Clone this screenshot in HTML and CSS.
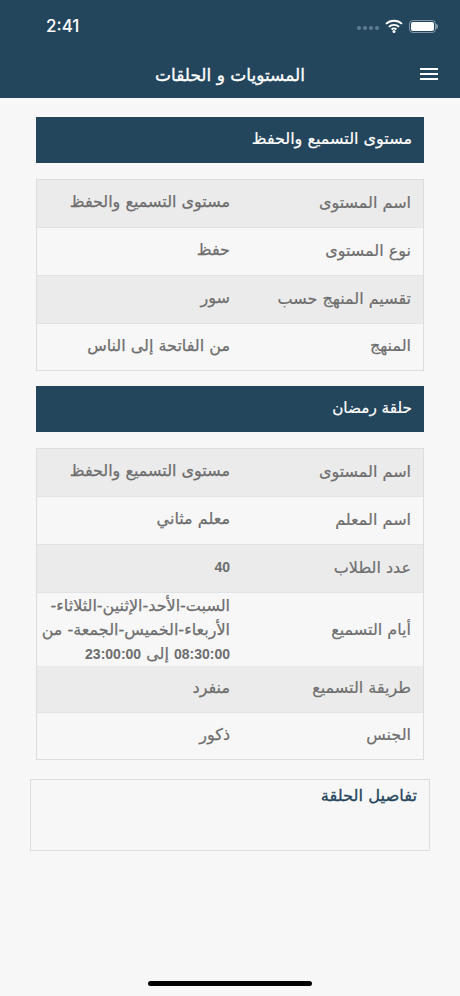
FILE: index.html
```html
<!DOCTYPE html>
<html lang="ar">
<head>
<meta charset="utf-8">
<title>المستويات و الحلقات</title>
<link rel="stylesheet" href="styles.css">
</head>
<body>
<header class="top">
  <div class="status" dir="ltr">
    <span class="time">2:41</span>
    <div class="status-icons">
      <span class="dots"><i></i><i></i><i></i><i></i></span>
      <svg class="wifi" width="18" height="14" viewBox="0 0 18 14"><path d="M1 4.9a11.6 11.6 0 0 1 16 0M3.9 7.9a7.4 7.4 0 0 1 10.2 0M6.6 10.5a3.4 3.4 0 0 1 4.8 0" fill="none" stroke="#fff" stroke-width="1.9"/><circle cx="9" cy="12.4" r="1.5" fill="#fff"/></svg>
      <span class="battery"><b></b></span>
    </div>
  </div>
  <div class="nav" dir="ltr">
    <h1 dir="rtl">المستويات و الحلقات</h1>
    <span class="menu"><i></i><i></i><i></i></span>
  </div>
</header>
<main dir="rtl">
  <h2 class="band">مستوى التسميع والحفظ</h2>
  <div class="table">
    <div class="row"><span class="k">اسم المستوى</span><span class="v">مستوى التسميع والحفظ</span></div>
    <div class="row"><span class="k">نوع المستوى</span><span class="v">حفظ</span></div>
    <div class="row"><span class="k">تقسيم المنهج حسب</span><span class="v">سور</span></div>
    <div class="row"><span class="k">المنهج</span><span class="v">من الفاتحة إلى الناس</span></div>
  </div>
  <h2 class="band band-two">حلقة رمضان</h2>
  <div class="table">
    <div class="row"><span class="k">اسم المستوى</span><span class="v">مستوى التسميع والحفظ</span></div>
    <div class="row"><span class="k">اسم المعلم</span><span class="v">معلم مثاني</span></div>
    <div class="row"><span class="k">عدد الطلاب</span><span class="v"><span class="num">40</span></span></div>
    <div class="row row-tall"><span class="k">أيام التسميع</span><span class="v">السبت-الأحد-الإثنين-الثلاثاء-الأربعاء-الخميس-الجمعة- من <span class="num">08:30:00</span> إلى <span class="num">23:00:00</span></span></div>
    <div class="row"><span class="k">طريقة التسميع</span><span class="v">منفرد</span></div>
    <div class="row"><span class="k">الجنس</span><span class="v">ذكور</span></div>
  </div>
  <section class="details"><h3>تفاصيل الحلقة</h3></section>
</main>
<div class="home"></div>
</body>
</html>
```
FILE: styles.css
```css
* { box-sizing: border-box; }
html, body { margin: 0; padding: 0; }
body {
  width: 460px;
  height: 996px;
  overflow: hidden;
  background: #f7f7f8;
  font-family: "DejaVu Sans", "Noto Sans", sans-serif;
  position: relative;
}
.top { height: 98px; background: #24465c; color: #fff; padding-top: 13px; }
.status { display: flex; justify-content: space-between; align-items: center; height: 26px; padding: 0 24px 0 46px; }
.time { font-family: "Inter", "Liberation Sans", sans-serif; font-size: 17px; font-weight: 500; }
.status-icons { display: flex; align-items: center; gap: 6px; }
.dots { display: flex; gap: 2px; margin-top: 4px; }
.dots i { width: 4px; height: 4px; border-radius: 50%; background: #5f7d92; }
.battery { width: 27px; height: 13px; border: 1px solid #7f97a8; border-radius: 4px; padding: 1px; position: relative; }
.battery b { display: block; height: 100%; background: #fff; border-radius: 2px; }
.battery::after { content: ""; position: absolute; right: -3px; top: 3px; width: 2px; height: 5px; background: #7f97a8; border-radius: 0 2px 2px 0; }
.nav { position: relative; display: flex; justify-content: center; align-items: center; height: 59px; padding: 12px 0 0; }
.nav h1 { margin: 0; font-size: 17px; font-weight: 400; -webkit-text-stroke: 0.35px #fff; color: #fff; }
.menu { position: absolute; right: 22px; top: 29px; display: flex; flex-direction: column; gap: 3px; }
.menu i { display: block; width: 18px; height: 2px; background: #fff; }
main { padding: 19px 36px 0; }
.band { margin: 0; height: 46px; display: flex; align-items: center; padding: 0 12px 3px; background: #24465c; color: #fff; font-size: 16px; font-weight: 400; -webkit-text-stroke: 0.2px #fff; }
.band-two { margin-top: 15px; font-size: 15.25px; padding-bottom: 2px; }
.table { margin-top: 16px; border: 1px solid #dcdde0; }
.row { display: grid; grid-template-columns: 180px 1fr; min-height: 48px; padding-bottom: 3px; align-items: center; color: #6e6e6e; font-size: 16px; border-bottom: 1px solid #e2e3e5; }
.row:last-child { min-height: 46px; border-bottom: 0; }
.row:nth-child(odd) { background: #ebebeb; }
.k { padding: 0 12px 0 4px; -webkit-text-stroke: 0.2px #6e6e6e; }
.v { padding: 0 13px 0 6px; font-weight: 400; -webkit-text-stroke: 0.25px #6e6e6e; font-size: 16px; line-height: 24px; }
.num { font-family: "Liberation Sans", sans-serif; font-weight: 700; font-size: 14px; -webkit-text-stroke: 0; }
.row-tall { min-height: 73px; padding-bottom: 0; border-bottom: 0; }
.row-tall + .row { min-height: 47px; }
.row-tall .v { padding-left: 0; margin-left: -4px; }
.details { margin: 19px -6px 0; height: 72px; border: 1px solid #dcdde0; padding: 6px 12px; }
.details h3 { margin: 0; color: #24465c; font-size: 16.3px; font-weight: 400; -webkit-text-stroke: 0.3px #24465c; }
.home { position: absolute; left: 148px; top: 981px; width: 164px; height: 5px; border-radius: 3px; background: #000; }
```
